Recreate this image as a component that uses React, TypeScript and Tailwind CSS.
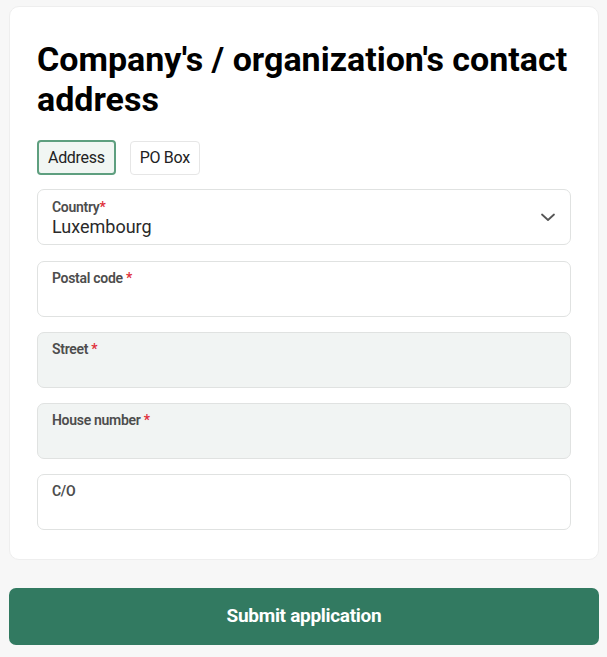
import React from "react";

function Field({ label, required, disabled }: { label: string; required?: boolean; disabled?: boolean }) {
  return (
    <div
      className={`h-[56px] rounded-[7px] border border-[#e0e2e1] px-[14px] pt-[7px] ${disabled ? "bg-[#f1f4f3]" : "bg-white"}`}
    >
      <div className="text-[14px] font-semibold leading-[18px] text-[#4d4d4d] tracking-[-0.3px]">
        {label}
        {required && <span className="text-[#e0303a]"> *</span>}
      </div>
    </div>
  );
}

export default function App() {
  return (
    <div className="min-h-[657px] bg-[#f7f7f7] pl-[9px] pr-[8px] pt-[6px] font-['Roboto',sans-serif]">
      <div className="rounded-[10px] border border-[#eeeeee] bg-white px-[27px] pt-[32px] pb-[29px]">
        <h1 className="text-[34px] font-bold leading-[40px] text-black">
          Company's / organization's contact address
        </h1>
        <div className="mt-[21px] flex gap-[14px]">
          <button className="h-[35px] rounded-[4px] border-2 border-[#5e9f7f] bg-[#f1f6f3] px-[9px] text-[16px] text-[#222] tracking-[-0.3px]">
            Address
          </button>
          <button className="mt-[1px] h-[34px] rounded-[4px] border border-[#e6e6e6] bg-white px-[9px] text-[16px] text-[#222] tracking-[-0.3px]">
            PO Box
          </button>
        </div>
        <div className="mt-[14px] flex flex-col gap-[15px]">
          <div className="relative mb-[1px] h-[56px] rounded-[7px] border border-[#e0e2e1] bg-white px-[14px] pt-[8px]">
            <div className="text-[14px] font-semibold leading-[18px] text-[#4d4d4d] tracking-[-0.3px]">
              Country<span className="text-[#e0303a]">*</span>
            </div>
            <div className="text-[18px] leading-[22px] text-[#2a2a2a]">Luxembourg</div>
            <svg className="absolute right-[14px] top-[19px]" width="16" height="16" viewBox="0 0 16 16" fill="none">
              <path d="M2 5.5l6 5.5 6-5.5" stroke="#555" strokeWidth="1.8" strokeLinecap="round" strokeLinejoin="round" />
            </svg>
          </div>
          <Field label="Postal code" required />
          <Field label="Street" required disabled />
          <Field label="House number" required disabled />
          <Field label="C/O" />
        </div>
      </div>
      <button className="mt-[28px] h-[57px] w-full rounded-[7px] bg-[#327a61] text-[19px] font-bold text-white tracking-[-0.3px]">
        Submit application
      </button>
    </div>
  );
}
